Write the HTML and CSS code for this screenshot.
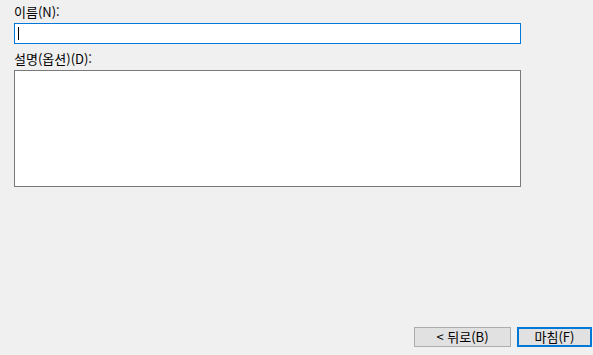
FILE: index.html
```html
<!DOCTYPE html>
<html lang="ko">
<head>
  <meta charset="UTF-8">
  <title>이름</title>
  <link rel="stylesheet" href="styles.css">
</head>
<body>
  <div class="page">
    <div class="form">
      <label class="label" for="name">이름(N):</label>
      <div class="name-box" id="name"><span class="caret"></span></div>
      <label class="label desc-label" for="desc">설명(옵션)(D):</label>
      <div class="desc-box" id="desc"></div>
    </div>
    <div class="button-row">
      <button class="btn">&lt; 뒤로(B)</button>
      <button class="btn btn-default">마침(F)</button>
    </div>
  </div>
</body>
</html>
```

FILE: styles.css
```css
body {
  margin: 0;
  padding: 0;
  background-color: #f0f0f0;
  font-family: "Noto Sans CJK KR", "Noto Sans", sans-serif;
  font-size: 13px;
  color: #000;
}

.page {
  height: 355px;
  display: flex;
  flex-direction: column;
  justify-content: space-between;
  box-sizing: border-box;
  padding: 4px 1px 8px 14px;
}

.form {
  display: flex;
  flex-direction: column;
  width: 507px;
}

.label {
  display: block;
  height: 19px;
  line-height: 16px;
}

.desc-label {
  margin-top: 7px;
}

.name-box {
  height: 21px;
  box-sizing: border-box;
  border: 1px solid #0078d7;
  background-color: #fff;
  padding: 3px 0 0 3px;
}

.caret {
  display: block;
  width: 1px;
  height: 13px;
  background-color: #000;
}

.desc-box {
  height: 117px;
  box-sizing: border-box;
  border: 1px solid #7a7a7a;
  background-color: #fff;
}

.button-row {
  display: flex;
  justify-content: flex-end;
  gap: 6px;
}

.btn {
  width: 97px;
  height: 20px;
  box-sizing: border-box;
  margin: 0;
  padding: 0;
  border: 1px solid #adadad;
  background-color: #e1e1e1;
  font-family: "Noto Sans CJK KR", "Noto Sans", sans-serif;
  font-size: 13px;
  line-height: 16px;
  color: #000;
}

.btn-default {
  width: 75px;
  border: 2px solid #0078d7;
}
```
